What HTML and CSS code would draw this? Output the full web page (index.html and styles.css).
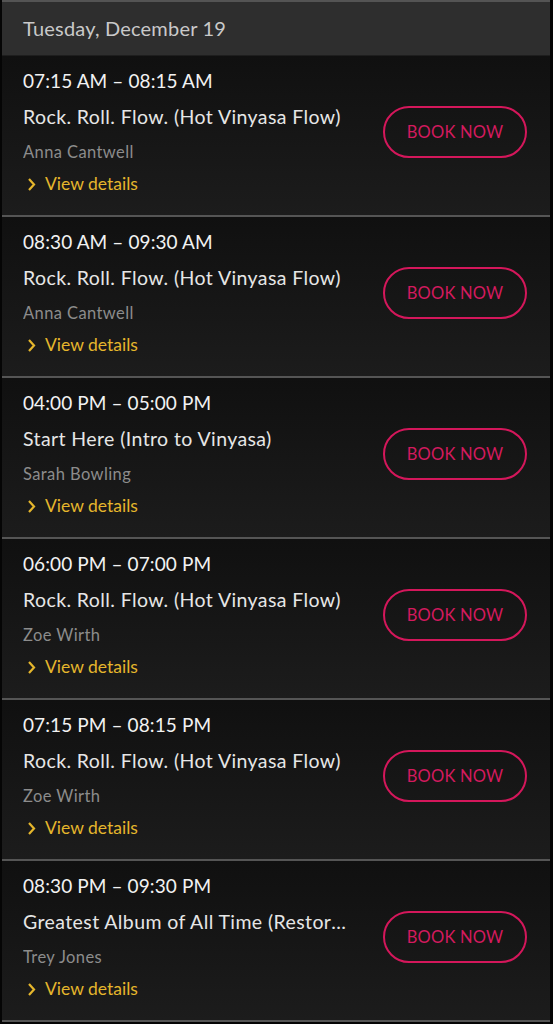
FILE: index.html
```html
<!DOCTYPE html>
<html lang="en">
<head>
    <meta charset="UTF-8">
    <meta name="viewport" content="width=device-width, initial-scale=1.0">
    <title>Schedule</title>
    <link rel="stylesheet" href="styles.css">
</head>
<body>
    <div class="schedule">
        <div class="day-header">Tuesday, December 19</div>

        <div class="session">
            <div class="info">
                <p class="time">07:15 AM – 08:15 AM</p>
                <p class="title">Rock. Roll. Flow. (Hot Vinyasa Flow)</p>
                <p class="teacher">Anna Cantwell</p>
                <a class="details" href="#"><svg class="chev" width="9" height="15" viewBox="0 0 9 15"><path d="M2 2 L7 7.5 L2 13" fill="none" stroke="currentColor" stroke-width="2.2"/></svg>View details</a>
            </div>
            <button class="book">BOOK NOW</button>
        </div>

        <div class="session">
            <div class="info">
                <p class="time">08:30 AM – 09:30 AM</p>
                <p class="title">Rock. Roll. Flow. (Hot Vinyasa Flow)</p>
                <p class="teacher">Anna Cantwell</p>
                <a class="details" href="#"><svg class="chev" width="9" height="15" viewBox="0 0 9 15"><path d="M2 2 L7 7.5 L2 13" fill="none" stroke="currentColor" stroke-width="2.2"/></svg>View details</a>
            </div>
            <button class="book">BOOK NOW</button>
        </div>

        <div class="session">
            <div class="info">
                <p class="time">04:00 PM – 05:00 PM</p>
                <p class="title">Start Here (Intro to Vinyasa)</p>
                <p class="teacher">Sarah Bowling</p>
                <a class="details" href="#"><svg class="chev" width="9" height="15" viewBox="0 0 9 15"><path d="M2 2 L7 7.5 L2 13" fill="none" stroke="currentColor" stroke-width="2.2"/></svg>View details</a>
            </div>
            <button class="book">BOOK NOW</button>
        </div>

        <div class="session">
            <div class="info">
                <p class="time">06:00 PM – 07:00 PM</p>
                <p class="title">Rock. Roll. Flow. (Hot Vinyasa Flow)</p>
                <p class="teacher">Zoe Wirth</p>
                <a class="details" href="#"><svg class="chev" width="9" height="15" viewBox="0 0 9 15"><path d="M2 2 L7 7.5 L2 13" fill="none" stroke="currentColor" stroke-width="2.2"/></svg>View details</a>
            </div>
            <button class="book">BOOK NOW</button>
        </div>

        <div class="session">
            <div class="info">
                <p class="time">07:15 PM – 08:15 PM</p>
                <p class="title">Rock. Roll. Flow. (Hot Vinyasa Flow)</p>
                <p class="teacher">Zoe Wirth</p>
                <a class="details" href="#"><svg class="chev" width="9" height="15" viewBox="0 0 9 15"><path d="M2 2 L7 7.5 L2 13" fill="none" stroke="currentColor" stroke-width="2.2"/></svg>View details</a>
            </div>
            <button class="book">BOOK NOW</button>
        </div>

        <div class="session">
            <div class="info">
                <p class="time">08:30 PM – 09:30 PM</p>
                <p class="title">Greatest Album of All Time (Restorative Flow)</p>
                <p class="teacher">Trey Jones</p>
                <a class="details" href="#"><svg class="chev" width="9" height="15" viewBox="0 0 9 15"><path d="M2 2 L7 7.5 L2 13" fill="none" stroke="currentColor" stroke-width="2.2"/></svg>View details</a>
            </div>
            <button class="book">BOOK NOW</button>
        </div>
    </div>
</body>
</html>
```

FILE: styles.css
```css
body {
    margin: 0;
    background-color: #050505;
    font-family: Lato, "Open Sans", sans-serif;
}
.schedule {
    margin: 0 3px 0 2px;
}
.day-header {
    height: 53px;
    line-height: 53px;
    padding-left: 21px;
    border-top: 2px solid #545454;
    border-bottom: 1px solid #1e1e1e;
    background-color: #2e2e2e;
    color: #c9c9c9;
    font-size: 20px;
    letter-spacing: 0.2px;
}
.session {
    display: flex;
    align-items: flex-start;
    height: 159px;
    padding: 0 23px 0 21px;
    border-bottom: 2px solid #555;
    background: linear-gradient(#101010, #1c1c1c);
}
.info {
    flex: 1;
    min-width: 0;
    padding-top: 12px;
    padding-right: 28px;
}
.info p {
    margin: 0;
    white-space: nowrap;
    overflow: hidden;
    text-overflow: ellipsis;
}
.time {
    line-height: 26px;
    font-size: 19px;
    letter-spacing: 0.1px;
    color: #f2f2f2;
}
.title {
    margin-top: 10px !important;
    line-height: 26px;
    font-size: 19.5px;
    letter-spacing: 0.4px;
    color: #e6e6e6;
}
.teacher {
    margin-top: 10px !important;
    line-height: 24px;
    font-size: 16.5px;
    letter-spacing: 0.4px;
    color: #8c8c8c;
}
.details {
    display: flex;
    align-items: center;
    margin-top: 8px;
    line-height: 24px;
    font-size: 17.5px;
    color: #e5b62c;
    text-decoration: none;
}
.chev {
    margin: 0 9px 0 4px;
}
.book {
    flex: none;
    width: 144px;
    height: 52px;
    margin-top: 50px;
    border: 2px solid #d4175b;
    border-radius: 26px;
    background: transparent;
    color: #d31a5e;
    font-family: Lato, "Open Sans", sans-serif;
    font-size: 16.5px;
    letter-spacing: 0.2px;
    cursor: pointer;
}
```
